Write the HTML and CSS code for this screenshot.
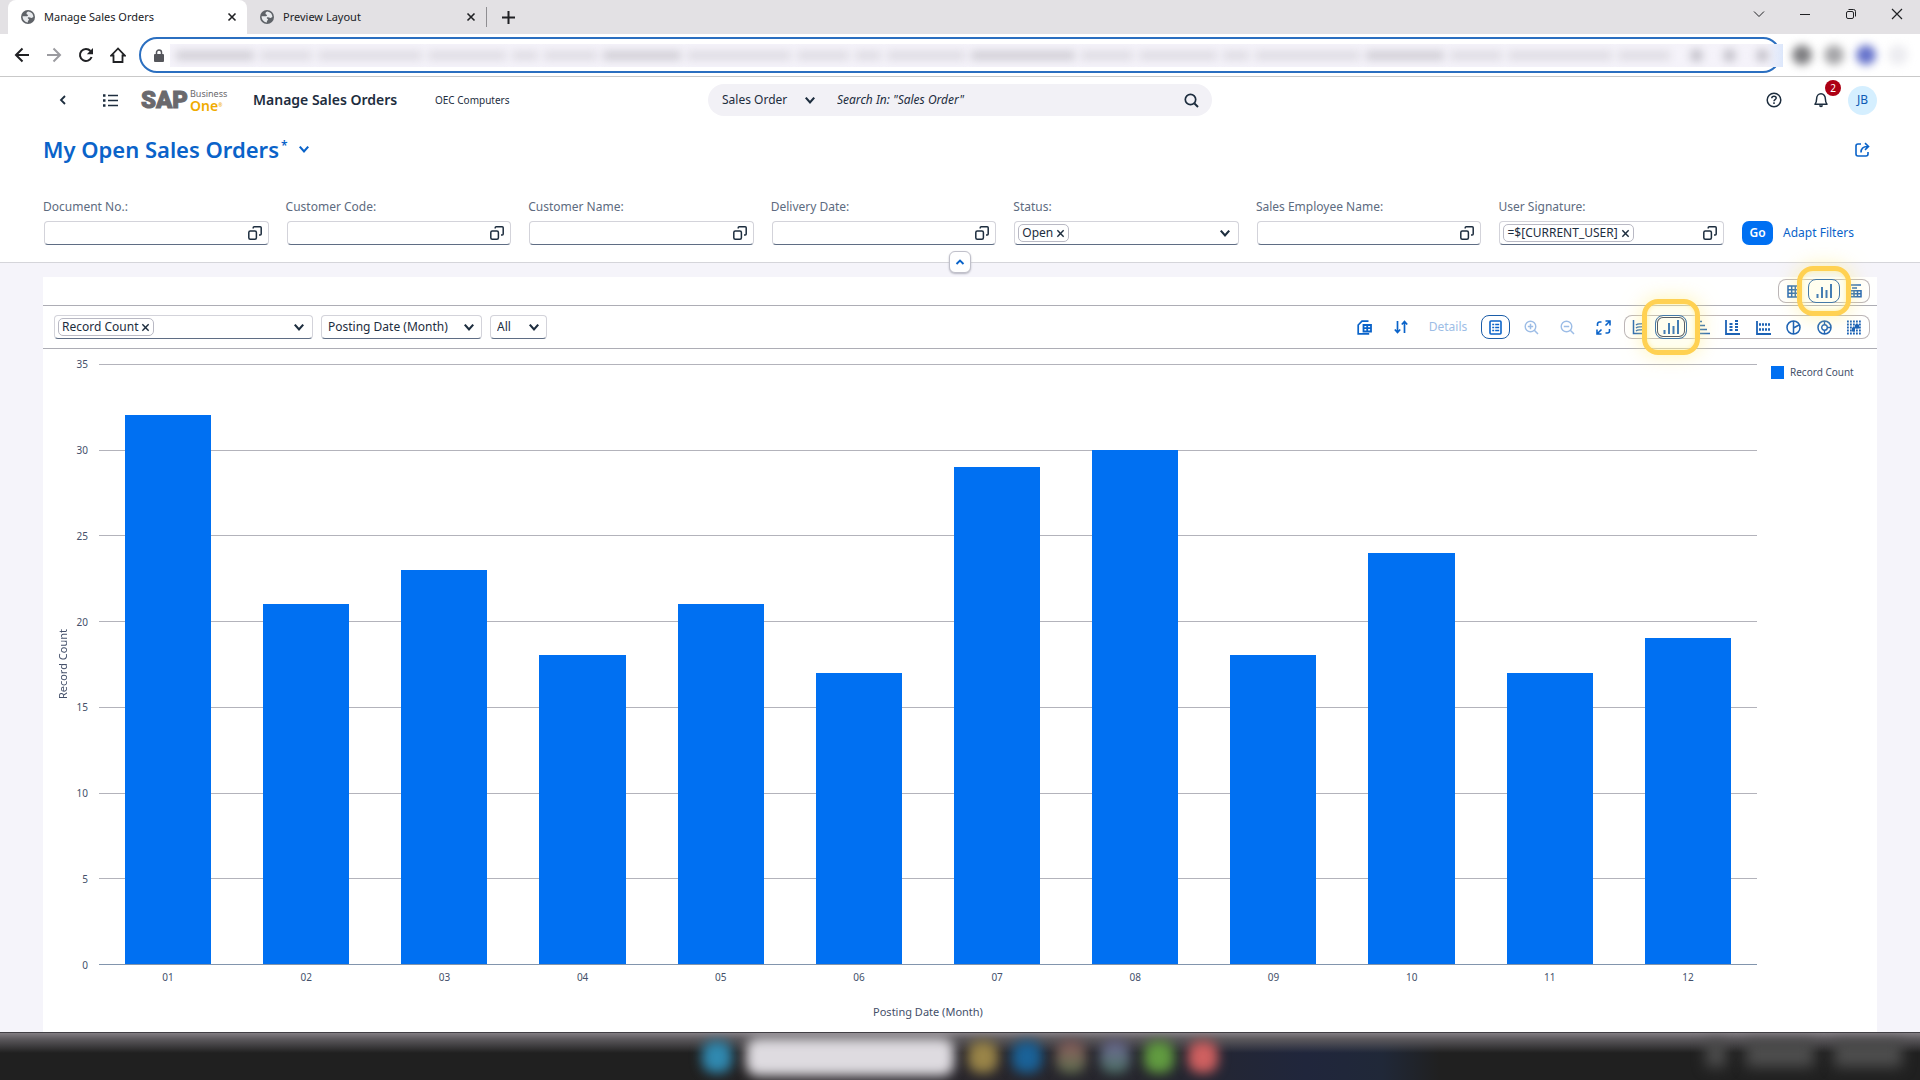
FILE: index.html
```html
<!DOCTYPE html>
<html lang="en">
<head>
  <meta charset="UTF-8">
  <meta name="viewport" content="width=device-width, initial-scale=1.0">
  <title>Manage Sales Orders</title>
  <link rel="stylesheet" href="styles.css">
</head>
<body>
  <svg class="sprite" aria-hidden="true">
    <symbol id="i-globe" viewBox="0 0 14 14">
      <circle cx="7" cy="7" r="7" fill="#5f6368"/>
      <path d="M7.500 1.600c-1.200.4-2.200 1.100-2 2.200.2.8 1.300.6 1.500 1.400.1.8-.9.9-1.600 1L1.600 6.200C1.400 9.500 4 12.300 7 12.400c-.2-1-.1-1.600.6-2.100.7-.5.4-1.300-.3-1.600-.8-.3-.7-1.100.1-1.400 1-.3 1.800.4 2.800.6.9.1 1.500-.4 2.200-.8C12.300 4.300 10.500 2 7.500 1.600z" fill="#e8eaed"/>
    </symbol>
    <symbol id="i-x" viewBox="0 0 10 10"><path d="M1.500 1.500l7 7M8.500 1.500l-7 7" stroke="currentColor" stroke-width="1.600" fill="none"/></symbol>
    <symbol id="i-down" viewBox="0 0 10 10"><path d="M1.500 3l3.500 4 3.500-4" stroke="currentColor" stroke-width="1.800" fill="none"/></symbol>
    <symbol id="i-help" viewBox="0 0 14 14">
      <rect x=".8" y="5" width="7.600" height="8.200" rx="1.500" stroke="currentColor" stroke-width="1.500" fill="none"/>
      <path d="M5.200 2.600V1.800a1 1 0 0 1 1-1h6a1 1 0 0 1 1 1V8a1 1 0 0 1-1 1H11" stroke="currentColor" stroke-width="1.500" fill="none"/>
    </symbol>
    <symbol id="i-bars" viewBox="0 0 16 16"><path d="M1.500 15v-4M6 15V4M10.500 15V7M15 15V1" stroke="currentColor" stroke-width="2" fill="none"/></symbol>
  </svg>

  <div class="browser">
    <div class="tabs">
      <div class="tab active">
        <svg width="14" height="14"><use href="#i-globe"/></svg>
        <span>Manage Sales Orders</span>
        <button aria-label="Close tab"><svg width="10" height="10"><use href="#i-x"/></svg></button>
      </div>
      <div class="tab">
        <svg width="14" height="14"><use href="#i-globe"/></svg>
        <span>Preview Layout</span>
        <button aria-label="Close tab"><svg width="10" height="10"><use href="#i-x"/></svg></button>
      </div>
      <button class="new-tab" aria-label="New tab"><svg width="13" height="13" viewBox="0 0 13 13"><path d="M6.500 0v13M0 6.500h13" stroke="currentColor" stroke-width="2"/></svg></button>
      <div class="window-buttons">
        <button aria-label="Search tabs"><svg width="12" height="12" viewBox="0 0 12 12"><path d="M1 3.500l5 5 5-5" stroke="currentColor" fill="none"/></svg></button>
        <button aria-label="Minimize"><svg width="12" height="12" viewBox="0 0 12 12"><path d="M1 6.500h10" stroke="currentColor"/></svg></button>
        <button aria-label="Restore"><svg width="12" height="12" viewBox="0 0 12 12"><rect x="1.500" y="3.500" width="7" height="7" rx="1.500" stroke="currentColor" fill="none"/><path d="M3.500 1.500H8.500a2 2 0 0 1 2 2V8.500" stroke="currentColor" fill="none"/></svg></button>
        <button aria-label="Close"><svg width="12" height="12" viewBox="0 0 12 12"><path d="M1 1l10 10M11 1L1 11" stroke="currentColor" stroke-width="1.200"/></svg></button>
      </div>
    </div>

    <div class="toolbar">
      <button aria-label="Back"><svg width="16" height="16" viewBox="0 0 16 16"><path d="M15 8H2M8.500 1.500L2 8l6.500 6.500" stroke="currentColor" stroke-width="2" fill="none"/></svg></button>
      <button class="dim" aria-label="Forward"><svg width="16" height="16" viewBox="0 0 16 16"><path d="M1 8h13M7.500 1.500L14 8l-6.500 6.500" stroke="currentColor" stroke-width="2" fill="none"/></svg></button>
      <button aria-label="Reload"><svg width="16" height="16" viewBox="0 0 16 16"><path d="M13.600 10A6 6 0 1 1 12.500 4" stroke="currentColor" stroke-width="2" fill="none"/><path d="M15 1v6.200H8.800z" fill="currentColor"/></svg></button>
      <button aria-label="Home"><svg width="16" height="16" viewBox="0 0 16 16"><path d="M8 1.500L1.300 8.500H3.500V15h9V8.500h2.200z" stroke="currentColor" stroke-width="1.800" fill="none"/></svg></button>
      <div class="address">
        <svg width="10" height="13" viewBox="0 0 10 13"><rect x="0" y="5" width="10" height="8" rx="1" fill="#55565b"/><path d="M2.500 5V3.500a2.500 2.500 0 0 1 5 0V5" stroke="#55565b" stroke-width="1.500" fill="none"/></svg>
        <input type="text" aria-label="Address">
        <div class="smear" aria-hidden="true">
          <i class="w3 b"></i><i class="w2"></i><i class="w4"></i><i class="w3"></i><i class="w1"></i><i class="w2"></i><i class="w3 b"></i><i class="w4"></i><i class="w2"></i><i class="w1"></i><i class="w3"></i><i class="w4 b"></i><i class="w2"></i><i class="w3"></i><i class="w1"></i><i class="w4"></i><i class="w3 b"></i><i class="w2"></i><i class="w4"></i><i class="w2"></i>
          <b></b><b></b><b></b>
        </div>
      </div>
      <div class="extensions" aria-hidden="true"><i></i><i></i><i></i><i></i></div>
    </div>
  </div>

  <header class="page-header">
    <div class="shell">
      <button class="back" aria-label="Back"><svg width="8" height="10" viewBox="0 0 8 10"><path d="M6 1L2 5l4 4" stroke="currentColor" stroke-width="1.800" fill="none"/></svg></button>
      <button class="menu" aria-label="Menu"><svg width="15" height="13" viewBox="0 0 15 13"><path d="M5 1.500h10M5 6.500h10M5 11.500h10" stroke="currentColor" stroke-width="1.700"/><path d="M0 1.500h2.500M0 6.500h2.500M0 11.500h2.500" stroke="currentColor" stroke-width="2.400"/></svg></button>
      <div class="logo">
        <span class="sap">SAP</span>
        <span class="product"><span class="business">Business</span><span class="one">One<sup>®</sup></span></span>
      </div>
      <h1>Manage Sales Orders</h1>
      <span class="company">OEC Computers</span>
      <div class="search">
        <div class="select-wrap">
          <select aria-label="Search scope"><option>Sales Order</option></select>
          <svg width="12" height="12"><use href="#i-down"/></svg>
        </div>
        <input type="text" aria-label="Search" placeholder='Search In: "Sales Order"'>
        <button aria-label="Search"><svg width="15" height="15" viewBox="0 0 15 15"><circle cx="6.500" cy="6.500" r="5.200" stroke="currentColor" stroke-width="1.700" fill="none"/><path d="M10.500 10.500l3.500 3.500" stroke="currentColor" stroke-width="1.900"/></svg></button>
      </div>
      <div class="shell-right">
        <button aria-label="Help"><svg width="16" height="16" viewBox="0 0 16 16"><circle cx="8" cy="8" r="6.800" stroke="currentColor" stroke-width="1.500" fill="none"/><path d="M5.800 6.300c0-1.300 1-2.100 2.200-2.100s2.200.8 2.200 1.900c0 1.500-2.200 1.500-2.200 3.100M8 10.300v1.600" stroke="currentColor" stroke-width="1.500" fill="none"/></svg></button>
        <button class="bell" aria-label="Notifications"><svg width="14" height="16" viewBox="0 0 14 16"><path d="M1 12.300h12c-1.300-1.500-1.600-2.500-1.600-5.300C11.400 4 9.600 1.800 7 1.800S2.600 4 2.600 7c0 2.800-.3 3.800-1.600 5.300z" stroke="currentColor" stroke-width="1.500" stroke-linejoin="round" fill="none"/><path d="M5 13.300h4a2 2 0 0 1-4 0z" fill="currentColor"/></svg><span class="badge">2</span></button>
        <button class="avatar" aria-label="Profile">JB</button>
      </div>
    </div>

    <div class="title-row">
      <h2>My Open Sales Orders<sup>*</sup></h2>
      <button aria-label="Select view"><svg width="12" height="12"><use href="#i-down"/></svg></button>
      <button class="share" aria-label="Share"><svg width="15" height="15" viewBox="0 0 15 15"><path d="M6 2H3a2 2 0 0 0-2 2v8a2 2 0 0 0 2 2h8a2 2 0 0 0 2-2v-2" stroke="currentColor" stroke-width="1.600" fill="none"/><path d="M6 10.500C6 6.500 8 4.500 12.500 4.500M10 1.200l3.500 3.300L10 7.800" stroke="currentColor" stroke-width="1.600" fill="none"/></svg></button>
    </div>

    <form class="filters">
      <div class="field">
        <label for="docNo">Document No.:</label>
        <div class="box"><input type="text" id="docNo"><button type="button" aria-label="Value help"><svg width="14" height="14"><use href="#i-help"/></svg></button></div>
      </div>
      <div class="field">
        <label for="custCode">Customer Code:</label>
        <div class="box"><input type="text" id="custCode"><button type="button" aria-label="Value help"><svg width="14" height="14"><use href="#i-help"/></svg></button></div>
      </div>
      <div class="field">
        <label for="custName">Customer Name:</label>
        <div class="box"><input type="text" id="custName"><button type="button" aria-label="Value help"><svg width="14" height="14"><use href="#i-help"/></svg></button></div>
      </div>
      <div class="field">
        <label for="delDate">Delivery Date:</label>
        <div class="box"><input type="text" id="delDate"><button type="button" aria-label="Value help"><svg width="14" height="14"><use href="#i-help"/></svg></button></div>
      </div>
      <div class="field">
        <label for="status">Status:</label>
        <div class="box"><span class="token">Open<svg width="9" height="9"><use href="#i-x"/></svg></span><input type="text" id="status"><button type="button" aria-label="Open list"><svg width="12" height="12"><use href="#i-down"/></svg></button></div>
      </div>
      <div class="field">
        <label for="empName">Sales Employee Name:</label>
        <div class="box"><input type="text" id="empName"><button type="button" aria-label="Value help"><svg width="14" height="14"><use href="#i-help"/></svg></button></div>
      </div>
      <div class="field">
        <label for="userSig">User Signature:</label>
        <div class="box"><span class="token">=$[CURRENT_USER]<svg width="9" height="9"><use href="#i-x"/></svg></span><input type="text" id="userSig"><button type="button" aria-label="Value help"><svg width="14" height="14"><use href="#i-help"/></svg></button></div>
      </div>
      <div class="filter-actions">
        <button type="button" class="go">Go</button>
        <a href="#">Adapt Filters</a>
      </div>
    </form>
    <button class="collapse" aria-label="Collapse header"><svg width="10" height="8" viewBox="0 0 10 8"><path d="M1.500 6L5 2.500 8.500 6" stroke="currentColor" stroke-width="1.900" fill="none"/></svg></button>
  </header>

  <main class="content">
    <div class="view-row">
      <div class="segmented views">
        <button aria-label="Table view"><svg width="13" height="13" viewBox="0 0 13 13"><path d="M1 1h11v11H1zM1 4.700h11M1 8.300h11M4.700 1v11M8.300 1v11" stroke="currentColor" stroke-width="1.500" fill="none"/></svg></button>
        <button class="selected" aria-label="Chart view"><svg width="16" height="16"><use href="#i-bars"/></svg><span class="highlight small"></span></button>
        <button aria-label="Chart and table view"><svg width="13" height="14" viewBox="0 0 13 14"><path d="M0 1h12M3 4h5M1.500 6.700h10.500v6h-10.500zM1.500 9.700h10.500M5 6.700v6M8.500 6.700v6" stroke="currentColor" stroke-width="1.500" fill="none"/></svg></button>
      </div>
    </div>

    <div class="chart-bar">
      <div class="box measure"><span class="token">Record Count<svg width="9" height="9"><use href="#i-x"/></svg></span><input type="text" aria-label="Measures"><button aria-label="Open list"><svg width="12" height="12"><use href="#i-down"/></svg></button></div>
      <div class="box select-wrap dimension"><select aria-label="Dimension"><option>Posting Date (Month)</option></select><svg width="12" height="12"><use href="#i-down"/></svg></div>
      <div class="box select-wrap limit"><select aria-label="Top records"><option>All</option></select><svg width="12" height="12"><use href="#i-down"/></svg></div>

      <div class="tools">
        <button aria-label="Save as"><svg width="15" height="15" viewBox="0 0 15 15"><path d="M11.500 1.200H5L1.200 5V13.800h11" stroke="currentColor" stroke-width="1.700" fill="none"/><path d="M6.500 5h7.500v6.500H6.500zM6.500 8.200H14M10.200 5v6.500" stroke="currentColor" stroke-width="1.800" fill="none"/></svg></button>
        <button aria-label="Sort"><svg width="14" height="14" viewBox="0 0 14 14"><path d="M3.500 1v11M.8 9.500l2.700 3 2.700-3M10.500 13V2M7.800 4.500l2.700-3 2.700 3" stroke="currentColor" stroke-width="1.700" fill="none"/></svg></button>
        <button class="details" disabled>Details</button>
        <button class="selected" aria-label="Legend"><svg width="13" height="15" viewBox="0 0 13 15"><rect x="1" y="1" width="11" height="13" rx="1" stroke="currentColor" stroke-width="1.600" fill="none"/><path d="M3.200 4.500h2M6.200 4.500h4M3.200 7.500h2M6.200 7.500h4M3.200 10.500h2M6.200 10.500h4" stroke="currentColor" stroke-width="1.600"/></svg></button>
        <button disabled aria-label="Zoom in"><svg width="15" height="15" viewBox="0 0 15 15"><circle cx="6.500" cy="6.500" r="5.300" stroke="currentColor" stroke-width="1.400" fill="none"/><path d="M10.300 10.300L14 14M3.800 6.500h5.400M6.500 3.800v5.400" stroke="currentColor" stroke-width="1.500"/></svg></button>
        <button disabled aria-label="Zoom out"><svg width="15" height="15" viewBox="0 0 15 15"><circle cx="6.500" cy="6.500" r="5.300" stroke="currentColor" stroke-width="1.400" fill="none"/><path d="M10.300 10.300L14 14M3.800 6.500h5.400" stroke="currentColor" stroke-width="1.500"/></svg></button>
        <button aria-label="Full screen"><svg width="15" height="15" viewBox="0 0 15 15"><path d="M9.500 1H14v4.500M14 1L9.500 5.500M5.500 14H1V9.500M1 14l4.500-4.500M1.500 6V4a2 2 0 0 1 2-2h2M13.500 9v2a2 2 0 0 1-2 2h-2" stroke="currentColor" stroke-width="1.600" fill="none"/></svg></button>
      </div>
      <div class="segmented types">
        <button aria-label="Line chart"><svg width="15" height="15" viewBox="0 0 15 15"><path d="M1.500 0v13.500H15" stroke="currentColor" stroke-width="1.500" fill="none"/><path d="M4 5c3-3 6 1 10-3M4 8c3-3 6 1 10-3M4 11c3-3 6 1 10-3" stroke="currentColor" stroke-width="1.200" fill="none"/></svg></button>
        <button class="selected focus" aria-label="Column chart"><svg width="16" height="16"><use href="#i-bars"/></svg><span class="highlight"></span></button>
        <button aria-label="Bar chart"><svg width="15" height="15" viewBox="0 0 15 15"><path d="M1 1.500h6M1 5.500h9M1 9.500h11M1 13.500h14" stroke="currentColor" stroke-width="1.600"/></svg></button>
        <button aria-label="Stacked column chart"><svg width="15" height="15" viewBox="0 0 15 15"><path d="M1 0v14h14" stroke="currentColor" stroke-width="1.800" fill="none"/><path d="M6 3v9M11.500 0v12" stroke="currentColor" stroke-width="3" stroke-dasharray="2 1"/></svg></button>
        <button aria-label="Stacked bar chart"><svg width="15" height="15" viewBox="0 0 15 15"><path d="M1 1v13h14" stroke="currentColor" stroke-width="1.800" fill="none"/><path d="M3 4.500h12M3 9.500h12" stroke="currentColor" stroke-width="2.500" stroke-dasharray="2 1"/></svg></button>
        <button aria-label="Pie chart"><svg width="15" height="15" viewBox="0 0 15 15"><circle cx="7.500" cy="7.500" r="6.500" stroke="currentColor" stroke-width="1.500" fill="none"/><path d="M7.500 1v13M7.500 8L13 5" stroke="currentColor" stroke-width="1.500"/></svg></button>
        <button aria-label="Donut chart"><svg width="15" height="15" viewBox="0 0 15 15"><circle cx="7.500" cy="7.500" r="6.500" stroke="currentColor" stroke-width="1.500" fill="none"/><circle cx="7.500" cy="7.500" r="2.800" stroke="currentColor" stroke-width="1.400" fill="none"/><path d="M7.500 1v3.500M7.500 10.500V14M10.300 7.500H14" stroke="currentColor" stroke-width="1.400"/></svg></button>
        <button aria-label="Heat map"><svg width="15" height="15" viewBox="0 0 15 15"><path d="M0 1.500h15M0 4.500h15M0 7.500h15M0 10.500h15M0 13.500h15" stroke="currentColor" stroke-width="1.800" stroke-dasharray="1.800 1.200"/><path d="M5 7.500h3v-3h4v4H8v3H5z" fill="currentColor"/></svg></button>
      </div>
    </div>

    <div class="chart">
      <div class="y-title">Record Count</div>
      <div class="y-axis"><span>35</span><span>30</span><span>25</span><span>20</span><span>15</span><span>10</span><span>5</span><span>0</span></div>
      <div class="plot">
        <div class="lines"><i></i><i></i><i></i><i></i><i></i><i></i><i></i></div>
        <div class="bars">
          <div class="bar" style="height: 91.43%"></div>
          <div class="bar" style="height: 60%"></div>
          <div class="bar" style="height: 65.71%"></div>
          <div class="bar" style="height: 51.43%"></div>
          <div class="bar" style="height: 60%"></div>
          <div class="bar" style="height: 48.57%"></div>
          <div class="bar" style="height: 82.86%"></div>
          <div class="bar" style="height: 85.71%"></div>
          <div class="bar" style="height: 51.43%"></div>
          <div class="bar" style="height: 68.57%"></div>
          <div class="bar" style="height: 48.57%"></div>
          <div class="bar" style="height: 54.29%"></div>
        </div>
      </div>
      <div class="legend"><i></i>Record Count</div>
      <div class="x-axis"><span>01</span><span>02</span><span>03</span><span>04</span><span>05</span><span>06</span><span>07</span><span>08</span><span>09</span><span>10</span><span>11</span><span>12</span></div>
      <div class="x-title">Posting Date (Month)</div>
    </div>
  </main>

  <footer class="taskbar" aria-hidden="true">
    <div class="apps">
      <i class="start"></i><i class="find"></i><i class="folder"></i><i class="edge"></i><i class="chrome"></i><i class="teams"></i><i class="green"></i><i class="red"></i>
    </div>
    <div class="tray"><i></i><i></i><i></i></div>
  </footer>
</body>
</html>
```
FILE: styles.css
```css
* {
  box-sizing: border-box;
}
body {
  margin: 0;
  min-height: 100vh;
  display: flex;
  flex-direction: column;
  font-family: "Noto Sans", sans-serif;
  font-size: 12px;
  line-height: 16px;
  color: #1d2d3e;
  background: #f5f4fa;
}
button, input, select {
  font: inherit;
  color: inherit;
  background: none;
  border: 0;
  padding: 0;
  margin: 0;
  outline: 0;
}
button {
  display: flex;
  align-items: center;
  justify-content: center;
  flex-shrink: 0;
}
input {
  min-width: 0;
  flex: 1;
}
svg {
  display: block;
  flex-shrink: 0;
}
h1, h2 {
  margin: 0;
  font-weight: 600;
}
.sprite {
  position: absolute;
  width: 0;
  height: 0;
}

/* browser frame */
.browser {
  background: #fff;
  border-bottom: 1px solid #c9c9c9;
  color: #202124;
}
.tabs {
  display: flex;
  height: 34px;
  padding-left: 8px;
  background: #e3e1e4;
  font-size: 11px;
}
.tab {
  display: flex;
  align-items: center;
  width: 239px;
  padding: 0 10px 0 13px;
  gap: 9px;
}
.tab span {
  flex: 1;
}
.tab.active {
  background: #fff;
  border-radius: 8px 8px 0 0;
}
.new-tab {
  width: 44px;
  border-left: 1px solid #8f8e92;
  margin: 7px 0;
}
.window-buttons {
  display: flex;
  margin-left: auto;
  height: 28px;
}
.window-buttons button {
  width: 46px;
}
.toolbar {
  display: flex;
  align-items: center;
  height: 42px;
  padding: 0 6px;
}
.toolbar button {
  width: 32px;
}
.toolbar .dim {
  color: #9b9ba0;
}
.address {
  position: relative;
  display: flex;
  align-items: center;
  flex: 1;
  height: 36px;
  margin-left: 5px;
  padding: 0 13px;
  border: 2px solid #2b6fc0;
  border-radius: 18px;
}
.smear {
  position: absolute;
  top: 5px;
  left: 29px;
  right: -4px;
  height: 23px;
  display: flex;
  align-items: center;
  gap: 6px;
  padding: 0 14px 0 6px;
  background: linear-gradient(90deg, #f5f3fa 99%, #dce7fb);
  overflow: hidden;
}
.smear i {
  height: 9px;
  flex: 3;
  background: #dddbe2;
  filter: blur(4px);
}
.smear .b {
  background: #cfcdd4;
}
.smear .w1 {
  flex: 1;
}
.smear .w2 {
  flex: 2;
}
.smear .w4 {
  flex: 4;
}
.smear b {
  width: 13px;
  height: 13px;
  margin-left: 14px;
  border-radius: 50%;
  background: #c2c0c9;
  filter: blur(4px);
}
.extensions {
  display: flex;
  align-items: center;
  gap: 12px;
  width: 133px;
  padding-left: 11px;
}
.extensions i {
  width: 20px;
  height: 20px;
  border-radius: 10px;
  background: #7d7d80;
  filter: blur(4px);
}
.extensions i:nth-child(2) {
  background: #a5a5a8;
}
.extensions i:nth-child(3) {
  background: #6572cb;
}
.extensions i:nth-child(4) {
  background: #ececf0;
}

/* app header */
.page-header {
  position: relative;
  background: #fff;
  border-bottom: 1px solid #d5d5da;
}
.shell {
  display: grid;
  grid-template-columns: 32px 62px 112px 182px 273px 504px 1fr;
  align-items: center;
  height: 46px;
  padding: 0 43px 0 47px;
}
.logo {
  display: flex;
  align-items: center;
  gap: 2px;
}
.sap {
  font: 900 24px/24px Roboto, sans-serif;
  color: #6a696d;
  -webkit-text-stroke: 1px #6a696d;
}
.product {
  display: flex;
  flex-direction: column;
}
.business {
  font-size: 9px;
  line-height: 12px;
  color: #6a696d;
}
.one {
  font-size: 14px;
  line-height: 12px;
  font-weight: 600;
  color: #f0ab00;
}
.one sup {
  font-size: 5px;
  line-height: 0;
  vertical-align: 4px;
}
.shell h1 {
  font-size: 14px;
}
.company {
  font-size: 10px;
}
.search {
  display: flex;
  align-items: center;
  height: 32px;
  border-radius: 16px;
  background: #f2f1f6;
}
.select-wrap {
  display: grid;
  align-items: center;
}
.select-wrap select,
.select-wrap svg {
  grid-area: 1 / 1;
}
.select-wrap svg {
  justify-self: end;
  pointer-events: none;
}
.select-wrap select {
  appearance: none;
  height: 100%;
}
.search .select-wrap {
  width: 94px;
  margin: 0 21px 0 14px;
}
.search input {
  font-style: italic;
}
.search input::placeholder {
  color: #1d2d3e;
  opacity: 1;
}
.search button {
  width: 42px;
}
.shell-right {
  display: flex;
  align-items: center;
  justify-content: flex-end;
}
.shell-right button {
  width: 32px;
  height: 32px;
  margin-right: 15px;
}
.shell-right .bell {
  position: relative;
  margin-right: 11px;
}
.badge {
  position: absolute;
  top: -4px;
  right: -4px;
  width: 16px;
  border-radius: 8px;
  font-size: 10px;
  background: #ad0014;
  color: #fff;
}
.shell-right .avatar {
  width: 29px;
  height: 29px;
  margin-right: 0;
  border-radius: 50%;
  background: #d5efff;
  color: #0d5bb5;
}
.title-row {
  display: flex;
  align-items: center;
  height: 52px;
  padding: 0 42px 0 43px;
  color: #0a63c9;
}
.title-row h2 {
  font-size: 22px;
  line-height: 28px;
}
.title-row sup {
  font-size: 12px;
  line-height: 0;
  margin-left: 2px;
}
.title-row button {
  width: 32px;
}
.title-row .share {
  margin-left: auto;
}
.filters {
  display: flex;
  gap: 16px;
  padding: 24px 43px 17px;
}
.field {
  flex: 1;
  display: flex;
  flex-direction: column;
  gap: 6px;
  min-width: 0;
}
.field label {
  color: #5d6b80;
}
.field .box {
  margin: 0 1px;
}
.box {
  height: 24px;
  border: 1px solid #d3d3da;
  border-bottom-color: #5f6d84;
  border-radius: 4px;
  background: #fff;
}
.field .box, .measure {
  display: flex;
  align-items: center;
  padding-left: 3px;
}
.box button {
  width: 26px;
}
.token {
  display: flex;
  align-items: center;
  gap: 3px;
  height: 18px;
  padding: 0 3px;
  border: 1px solid #b9b9c4;
  border-radius: 5px;
}
.filter-actions {
  width: 136px;
  padding: 22px 0 0 1px;
  display: flex;
  align-items: center;
  gap: 10px;
}
.go {
  width: 31px;
  height: 24px;
  border-radius: 7px;
  background: #0070f2;
  color: #fff;
  font-weight: 600;
}
a {
  color: #0a63c9;
  text-decoration: none;
}
.collapse {
  position: absolute;
  left: 50%;
  bottom: -11px;
  width: 22px;
  height: 22px;
  margin-left: -11px;
  border: 1px solid #c0c0ca;
  border-radius: 6px;
  background: #fff;
  box-shadow: 0 1px 2px #b5b5c0;
  color: #0a63c9;
}

/* chart panel */
.content {
  flex: 1;
  display: flex;
  flex-direction: column;
  margin: 14px 43px 0;
  background: #fff;
}
.view-row {
  display: flex;
  justify-content: flex-end;
  height: 29px;
  padding: 2px 7px;
  border-bottom: 1px solid #adadb5;
}
.segmented {
  display: flex;
  height: 24px;
  border-radius: 8px;
  box-shadow: inset 0 0 0 1px #bbb5b8;
  color: #1c62b5;
}
.segmented button {
  position: relative;
  flex: 1;
}
.views {
  width: 92px;
}
.types {
  width: 246px;
}
.selected {
  border: 1px solid #1c5da8;
  border-radius: 8px;
  background: #fff;
}
.focus {
  box-shadow: inset 0 0 0 1px #fff, inset 0 0 0 2px #333c58;
}
.highlight {
  position: absolute;
  z-index: 2;
  inset: -17px -14px;
  border: 5px solid #ffd152;
  border-radius: 16px;
  background: #fff8a82e;
  box-shadow: 0 0 20px #ffec8099, inset 0 0 5px #fff0a0;
}
.highlight.small {
  inset: -14px -12px;
}
.chart-bar {
  display: flex;
  align-items: center;
  height: 43px;
  padding: 0 7px 0 11px;
  gap: 8px;
  border-bottom: 1px solid #adadb5;
}
.measure {
  width: 259px;
}
.dimension {
  width: 161px;
}
.limit {
  width: 57px;
}
.chart-bar .select-wrap {
  padding: 0 6px;
}
.tools {
  display: flex;
  align-items: center;
  gap: 7px;
  margin: 0 -2px 0 auto;
  color: #0a63c9;
}
.tools button {
  width: 29px;
  height: 24px;
}
.tools .details {
  width: 52px;
}
.tools button:disabled {
  color: #9dbde6;
}
.chart {
  flex: 1;
  display: grid;
  grid-template-columns: 28px 28px 1fr 120px;
  grid-template-rows: 1fr 39px 28px;
  padding-top: 15px;
  font-size: 11px;
  color: #44506a;
}
.y-title {
  justify-self: end;
  align-self: center;
  writing-mode: vertical-rl;
  transform: rotate(180deg);
}
.y-axis {
  display: flex;
  flex-direction: column;
  justify-content: space-between;
  margin: -8px 11px -8px 0;
  text-align: right;
  font-size: 10px;
}
.plot {
  display: grid;
  border-bottom: 1px solid #8295ad;
}
.lines, .bars {
  grid-area: 1 / 1;
  display: flex;
}
.lines {
  flex-direction: column;
}
.lines i {
  flex: 1;
  border-top: 1px solid #b3b3bb;
}
.bars {
  align-items: flex-end;
  justify-content: space-around;
}
.bar {
  width: 5.2%;
  background: #0070f2;
}
.legend {
  display: flex;
  align-items: center;
  gap: 6px;
  height: 16px;
  padding-left: 14px;
  font-size: 10px;
}
.legend i {
  width: 13px;
  height: 13px;
  background: #0070f2;
}
.x-axis {
  grid-column: 3;
  display: flex;
  padding-top: 4px;
  font-size: 10px;
}
.x-axis span {
  flex: 1;
  text-align: center;
}
.x-title {
  grid-column: 3;
  text-align: center;
}

/* taskbar */
.taskbar {
  position: relative;
  display: flex;
  justify-content: center;
  height: 48px;
  border-top: 1px solid #424045;
  background: linear-gradient(#827d82, #5c595d 6px, #20202000 20px), linear-gradient(90deg, #202020 36%, #2a2529 42%, #26262e 60%, #20263c 68%, #202838 72%, #202020 75%);
  overflow: hidden;
}
.apps {
  display: flex;
  align-items: center;
  gap: 14px;
}
.apps i {
  width: 30px;
  height: 32px;
  border-radius: 12px;
  filter: blur(6px);
}
.apps .start {
  background: #3089b0;
}
.apps .find {
  width: 208px;
  height: 38px;
  background: #dedbe0;
}
.apps .folder {
  background: #998448;
}
.apps .edge {
  background: #1a6298;
}
.apps .chrome {
  background: linear-gradient(#8b5b5d, #607250);
}
.apps .teams {
  background: linear-gradient(#6e6894, #4e7466);
}
.apps .green {
  background: #619b40;
}
.apps .red {
  background: #cf6060;
}
.tray {
  position: absolute;
  right: 18px;
  top: 8px;
  display: flex;
  gap: 20px;
}
.tray i {
  width: 68px;
  height: 26px;
  background: #4e4e4e;
  filter: blur(7px);
}
.tray i:first-child {
  width: 20px;
}
```
